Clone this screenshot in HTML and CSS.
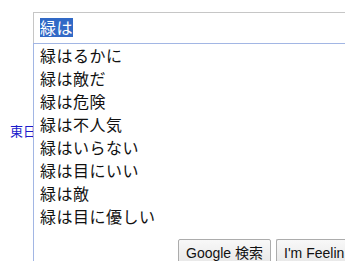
FILE: index.html
```html
<!DOCTYPE html>
<html lang="ja">
<head>
<meta charset="utf-8">
<link rel="stylesheet" href="styles.css">
</head>
<body>
<div class="page">
  <a class="news" href="#">東日</a>
  <div class="search">
    <div class="input"><span class="sel">緑は</span></div>
    <div class="dropdown">
      <ul class="list">
        <li>緑はるかに</li>
        <li>緑は敵だ</li>
        <li>緑は危険</li>
        <li>緑は不人気</li>
        <li>緑はいらない</li>
        <li>緑は目にいい</li>
        <li>緑は敵</li>
        <li>緑は目に優しい</li>
      </ul>
      <div class="buttons">
        <button class="btn">Google 検索</button>
        <button class="btn">I'm Feelin</button>
      </div>
    </div>
  </div>
</div>
</body>
</html>
```

FILE: styles.css
```css
html, body {
  margin: 0;
  padding: 0;
  background: #fff;
  overflow: hidden;
}
.page {
  position: relative;
  width: 345px;
  height: 261px;
  overflow: hidden;
  font-family: "Noto Sans CJK JP", sans-serif;
}
.search {
  position: absolute;
  z-index: 2;
  left: 33px;
  top: 12px;
  width: 312px;
}
.input {
  border-top: 1px solid #c6c6c6;
  border-left: 1px solid #c6c6c6;
  box-sizing: border-box;
  height: 31px;
  padding: 5px 0 0 6px;
  font-size: 16px;
  line-height: 19px;
  color: #000;
}
.sel {
  background: #3169c6;
  color: #fff;
  display: inline-block;
  height: 19px;
  line-height: 19px;
  letter-spacing: 0.5px;
}
.dropdown {
  background: #fff;
  border-top: 1px solid #a2b6e4;
  border-left: 1px solid #a2b6e4;
  height: 230px;
}
.list {
  list-style: none;
  margin: 0;
  padding: 0;
}
.list li {
  height: 23px;
  line-height: 23px;
  padding-left: 6px;
  font-size: 16px;
  letter-spacing: 0.5px;
  color: #111;
}
.buttons {
  display: flex;
  gap: 5px;
  margin-top: 11px;
  padding-left: 144px;
  overflow: hidden;
}
.btn {
  flex: none;
  font-family: "Liberation Sans", "Noto Sans CJK JP", sans-serif;
  font-size: 14px;
  color: #111;
  height: 28px;
  padding: 0 7px;
  background: linear-gradient(#f8f8f8, #e6e6e6);
  border: 1px solid #acacac;
  border-radius: 2px;
  white-space: nowrap;
  line-height: 26px;
}
.btn + .btn {
  width: 80px;
  text-align: left;
  border-right: none;
}
.news {
  position: absolute;
  z-index: 1;
  left: 10px;
  top: 122px;
  font-size: 13px;
  line-height: 17px;
  color: #1a1acc;
  text-decoration: none;
}
```
